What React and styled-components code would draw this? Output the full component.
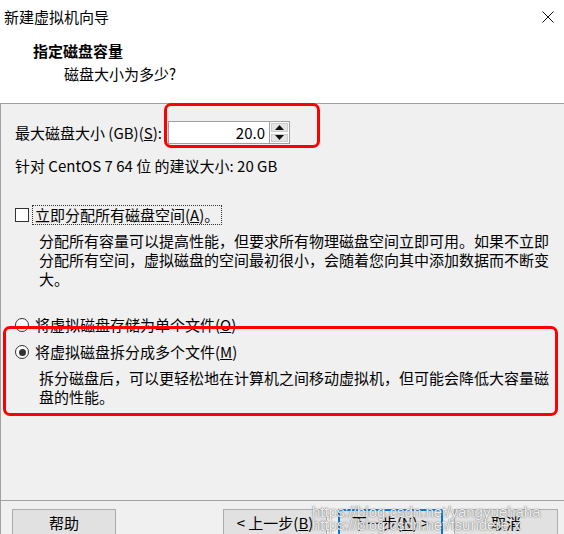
import React from "react";
import styled, { createGlobalStyle } from "styled-components";

const GlobalStyle = createGlobalStyle`
    html, body {
        margin: 0;
        padding: 0;
        background: #ffffff;
    }
    body {
        font-family: "Noto Sans CJK SC", "Microsoft YaHei", "Noto Sans", sans-serif;
        font-size: 15px;
        color: #000000;
    }
`;

function CloseIcon() {
    return (
        <svg width="12" height="12" viewBox="0 0 12 12">
            <path d="M0.5 0.5 L11.5 11.5 M11.5 0.5 L0.5 11.5" stroke="#111" strokeWidth="1" fill="none" />
        </svg>
    );
}

function Arrow({ down }) {
    return (
        <svg width="9" height="5" viewBox="0 0 9 5">
            <path d={down ? "M0 0 L9 0 L4.5 5 Z" : "M0 5 L9 5 L4.5 0 Z"} fill="#111" />
        </svg>
    );
}

const Key = ({ children }) => <u>{children}</u>;

export default function App() {
    return (
        <>
            <GlobalStyle />
            <Window>
                <TitleBar>
                    <span>新建虚拟机向导</span>
                    <CloseButton>
                        <CloseIcon />
                    </CloseButton>
                </TitleBar>
                <Header>
                    <Heading>指定磁盘容量</Heading>
                    <SubHeading>磁盘大小为多少?</SubHeading>
                </Header>
                <Body>
                    <SizeRow>
                        <span>
                            最大磁盘大小 (GB)(<Key>S</Key>):
                        </span>
                        <Spinner>
                            <Field>20.0</Field>
                            <SpinButtons>
                                <SpinButton>
                                    <Arrow />
                                </SpinButton>
                                <SpinButton>
                                    <Arrow down />
                                </SpinButton>
                            </SpinButtons>
                            <Marker $left={-4} $top={-18} $width={156} $height={45} />
                        </Spinner>
                    </SizeRow>
                    <Hint>针对 CentOS 7 64 位 的建议大小: 20 GB</Hint>

                    <OptionRow $gap={29}>
                        <CheckBox />
                        <FocusLabel>
                            立即分配所有磁盘空间(<Key>A</Key>)。
                        </FocusLabel>
                    </OptionRow>
                    <Description>
                        分配所有容量可以提高性能，但要求所有物理磁盘空间立即可用。如果不立即分配所有空间，虚拟磁盘的空间最初很小，会随着您向其中添加数据而不断变大。
                    </Description>

                    <OptionRow $gap={27}>
                        <Radio />
                        <Label>
                            将虚拟磁盘存储为单个文件(<Key>O</Key>)
                        </Label>
                    </OptionRow>
                    <Group>
                        <OptionRow $gap={7}>
                            <Radio $checked />
                            <Label>
                                将虚拟磁盘拆分成多个文件(<Key>M</Key>)
                            </Label>
                        </OptionRow>
                        <Description>
                            拆分磁盘后，可以更轻松地在计算机之间移动虚拟机，但可能会降低大容量磁盘的性能。
                        </Description>
                        <Marker $left={-12} $top={-9} $width={555} $height={90} />
                    </Group>
                </Body>
                <Footer>
                    <Button>帮助</Button>
                    <Spacer />
                    <ButtonGroup>
                        <Button>
                            &lt; 上一步(<Key>B</Key>)
                        </Button>
                        <Button $default>
                            下一步(<Key>N</Key>) &gt;
                        </Button>
                        <Button>取消</Button>
                    </ButtonGroup>
                </Footer>
                <Watermark>
                    <div>https://blog.csdn.net/yangyuehaha</div>
                    <div>https://blog.csdn.net/tsundere x</div>
                </Watermark>
            </Window>
        </>
    );
}

const Window = styled("div")`
    position: relative;
    width: 564px;
    height: 534px;
    overflow: hidden;
    display: flex;
    flex-direction: column;
    background: #f0f0f0;
`;

const TitleBar = styled("div")`
    height: 34px;
    flex-shrink: 0;
    display: flex;
    align-items: center;
    justify-content: space-between;
    padding: 0 10px 0 4px;
    background: #ffffff;
    line-height: 20px;
`;

const CloseButton = styled("div")`
    display: flex;
    align-items: center;
    justify-content: center;
    width: 12px;
    height: 12px;
`;

const Header = styled("div")`
    height: 70px;
    flex-shrink: 0;
    box-sizing: border-box;
    padding: 7px 0 0 33px;
    background: #ffffff;
    border-bottom: 1px solid #a0a0a0;
`;

const Heading = styled("div")`
    font-weight: 700;
    line-height: 20px;
`;

const SubHeading = styled("div")`
    margin-top: 3px;
    padding-left: 31px;
    line-height: 20px;
`;

const Body = styled("div")`
    flex: 1;
    display: flex;
    flex-direction: column;
    padding: 17px 0 0 14px;
    border-left: 1px solid #a0a0a0;
`;

const SizeRow = styled("div")`
    display: flex;
    align-items: center;
    gap: 6px;
    height: 23px;
    line-height: 20px;
`;

const Spinner = styled("div")`
    position: relative;
    display: flex;
    height: 23px;
`;

const Field = styled("div")`
    width: 101px;
    box-sizing: border-box;
    height: 23px;
    padding-right: 4px;
    border: 1px solid #a0a0a0;
    border-right: none;
    background: #ffffff;
    text-align: right;
    line-height: 21px;
`;

const SpinButtons = styled("div")`
    display: flex;
    flex-direction: column;
    width: 21px;
    border: 1px solid #a0a0a0;
    box-sizing: border-box;
    background: #ffffff;
`;

const SpinButton = styled("div")`
    flex: 1;
    display: flex;
    align-items: center;
    justify-content: center;
    margin: 1px;
    background: #e5e5e5;
    border: 1px solid #cccccc;
`;

const Marker = styled("div")`
    position: absolute;
    left: ${(props) => props.$left}px;
    top: ${(props) => props.$top}px;
    width: ${(props) => props.$width}px;
    height: ${(props) => props.$height}px;
    box-sizing: border-box;
    border: 3px solid #ff0000;
    border-radius: 7px;
    pointer-events: none;
`;

const Hint = styled("div")`
    margin-top: 12px;
    line-height: 20px;
`;

const OptionRow = styled("div")`
    display: flex;
    align-items: center;
    height: 20px;
    margin-top: ${(props) => props.$gap}px;
    line-height: 20px;
`;

const CheckBox = styled("div")`
    flex-shrink: 0;
    width: 14px;
    height: 14px;
    box-sizing: border-box;
    border: 1px solid #333333;
    background: #ffffff;
    margin-right: 3px;
`;

const FocusLabel = styled("span")`
    padding: 0 2px;
    border: 1px dotted #333333;
    line-height: 18px;
`;

const Radio = styled("div")`
    position: relative;
    flex-shrink: 0;
    width: 14px;
    height: 14px;
    box-sizing: border-box;
    border-radius: 50%;
    border: 1px solid #333333;
    background: #ffffff;
    margin-right: 6px;

    &::after {
        content: "";
        display: ${(props) => (props.$checked ? "block" : "none")};
        position: absolute;
        left: 2.5px;
        top: 2.5px;
        width: 7px;
        height: 7px;
        border-radius: 50%;
        background: #333333;
    }
`;

const Label = styled("span")`
    line-height: 20px;
`;

const Description = styled("div")`
    margin-top: 6px;
    padding: 0 8px 0 24px;
    line-height: 19px;
`;

const Group = styled("div")`
    position: relative;
    display: flex;
    flex-direction: column;
`;

const Footer = styled("div")`
    height: 34px;
    flex-shrink: 0;
    box-sizing: border-box;
    display: flex;
    align-items: flex-start;
    padding: 8px 6px 0 11px;
    border-top: 1px solid #a0a0a0;
    border-left: 1px solid #a0a0a0;
`;

const Spacer = styled("div")`
    flex: 1;
`;

const ButtonGroup = styled("div")`
    display: flex;
    gap: 11px;
`;

const Button = styled("div")`
    width: ${(props) => (props.$default ? 105 : 104)}px;
    height: 27px;
    box-sizing: border-box;
    display: flex;
    align-items: center;
    justify-content: center;
    background: #e1e1e1;
    border: ${(props) => (props.$default ? "2px solid #0078d7" : "1px solid #adadad")};
    line-height: 20px;
`;

const Watermark = styled("div")`
    position: absolute;
    left: 312px;
    top: 505px;
    font-family: "Liberation Sans", Arial, sans-serif;
    font-size: 15px;
    line-height: 13px;
    color: rgba(255, 255, 255, 0.9);
    text-shadow: 0 0 1px rgba(90, 90, 90, 0.9), 0 0 2px rgba(120, 120, 120, 0.6);
    pointer-events: none;
`;
